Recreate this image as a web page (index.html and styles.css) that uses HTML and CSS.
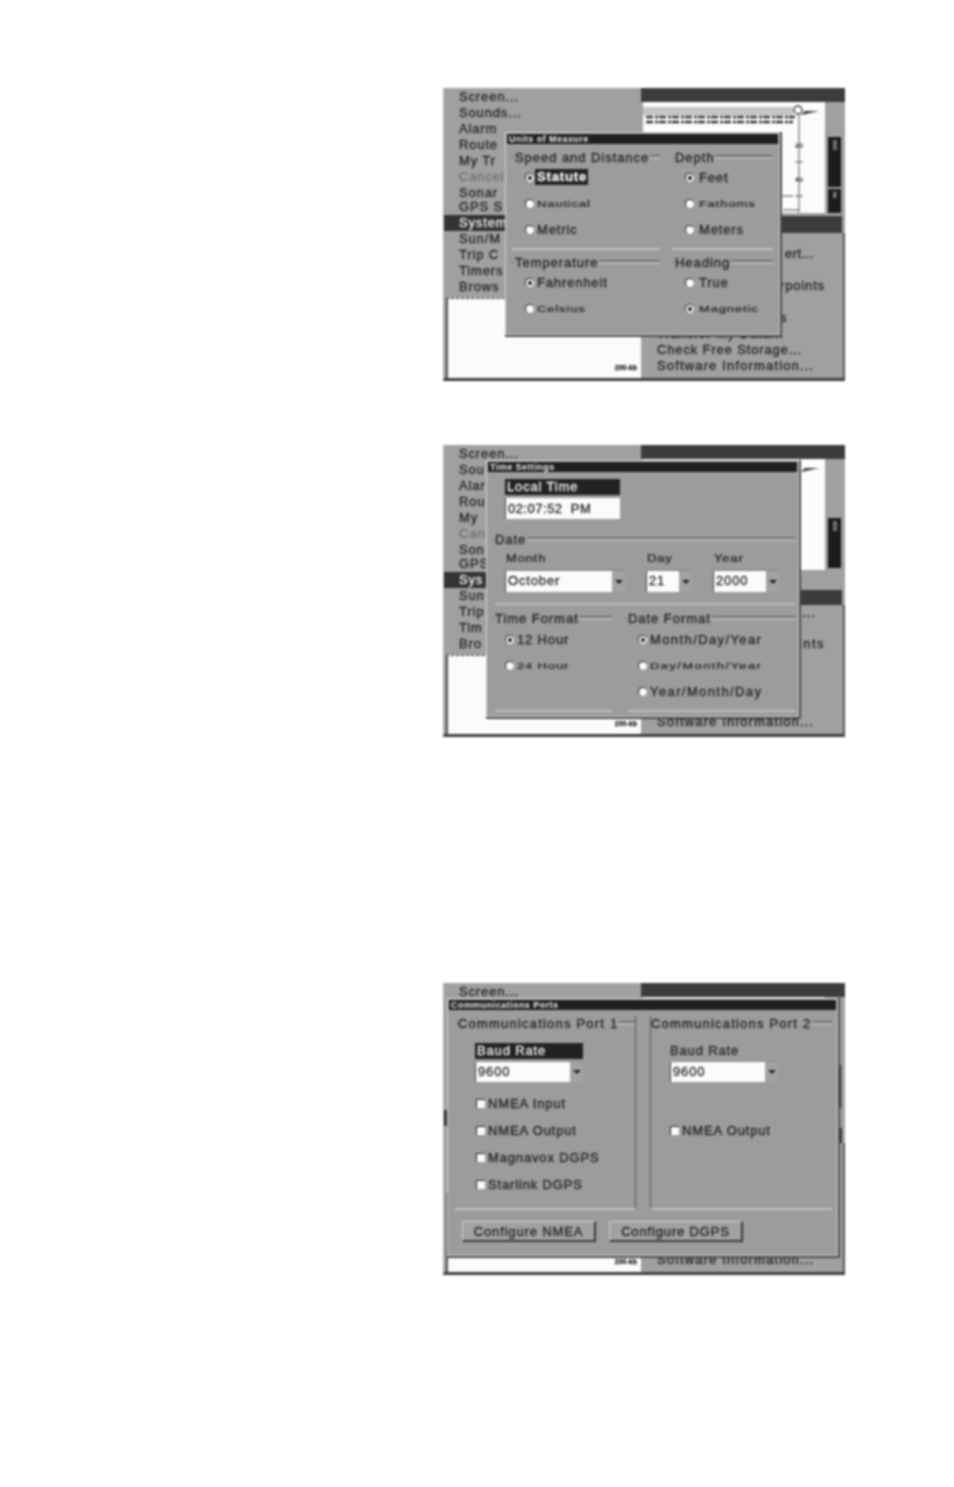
FILE: index.html
```html
<!DOCTYPE html>
<html lang="en">
<head>
<meta charset="utf-8">
<title>Setup screens</title>
<link rel="stylesheet" href="styles.css">
</head>
<body>
<main class="page">

<section class="screen">
  <div class="left-col">
    <ul class="menu">
      <li>Screen...</li><li>Sounds...</li><li>Alarm</li><li>Route</li><li>My Tr</li>
      <li class="dim">Cancel</li><li>Sonar</li><li>GPS S</li>
      <li class="sel">System</li><li>Sun/M</li><li>Trip C</li><li>Timers</li><li>Brows</li>
    </ul>
    <div class="map"><span class="scale">200-kb</span></div>
  </div>
  <div class="right-col">
    <div class="bar-top"></div>
    <div class="sonar-row">
      <svg class="sonar" viewBox="0 0 182 111" aria-hidden="true">
        <rect x="0" y="5" width="150" height="8" fill="#c4c4c4"/>
        <path d="M3 15H152M3 20H150" stroke="#333" stroke-width="2.5" stroke-dasharray="7 2 3 1"/>
        <path d="M156 12V111M152 44h8M152 60h8M152 78h8M152 94h8" stroke="#555" stroke-width="1"/>
        <circle cx="155" cy="8" r="4" fill="#fff" stroke="#444" stroke-width="1.5"/>
        <path d="M158 13L176 9L162 9Z" fill="#333"/>
        <text x="152" y="46" class="tick">20</text><text x="152" y="80" class="tick">40</text>
        <path d="M126 94H150M140 108H156" stroke="#444" stroke-width="1"/>
      </svg>
      <div class="side"><div class="side-bar"><span>600</span></div><div class="side-bar short"><span>kb</span></div></div>
    </div>
    <div class="bar-mid"></div>
    <ul class="menu menu-right">
      <li class="tail tail-ert">ert...</li>
      <li class="tail gap-row">rpoints</li>
      <li class="tail gap-row">s</li>
      <li>Transfer My Data...</li><li>Check Free Storage...</li><li class="soft">Software Information...</li>
    </ul>
  </div>

  <div class="dialog d-units">
    <h2 class="title">Units of Measure</h2>
    <div class="units-grid">
      <div class="group groove">
        <div class="legend">Speed and Distance</div>
        <div class="opt"><i class="radio on"></i><span class="hl">Statute</span></div>
        <div class="opt"><i class="radio"></i><span class="squish">Nautical</span></div>
        <div class="opt"><i class="radio"></i><span>Metric</span></div>
      </div>
      <div class="group groove">
        <div class="legend">Depth</div>
        <div class="opt"><i class="radio on"></i><span>Feet</span></div>
        <div class="opt"><i class="radio"></i><span class="squish">Fathoms</span></div>
        <div class="opt"><i class="radio"></i><span>Meters</span></div>
      </div>
      <div class="group">
        <div class="legend">Temperature</div>
        <div class="opt"><i class="radio on"></i><span>Fahrenheit</span></div>
        <div class="opt"><i class="radio"></i><span class="squish">Celsius</span></div>
      </div>
      <div class="group">
        <div class="legend">Heading</div>
        <div class="opt"><i class="radio"></i><span>True</span></div>
        <div class="opt"><i class="radio on"></i><span class="squish">Magnetic</span></div>
      </div>
    </div>
  </div>
</section>

<section class="screen screen-time">
  <div class="left-col">
    <ul class="menu">
      <li>Screen...</li><li>Sou</li><li>Alar</li><li>Rou</li><li>My</li>
      <li class="dim">Can</li><li>Son</li><li>GPS</li>
      <li class="sel">Sys</li><li>Sun</li><li>Trip</li><li>Tim</li><li>Bro</li>
    </ul>
    <div class="map"><span class="scale">200-kb</span></div>
  </div>
  <div class="right-col">
    <div class="bar-top"></div>
    <div class="sonar-row">
      <svg class="sonar" viewBox="0 0 182 111" aria-hidden="true">
        <path d="M158 13L176 9L162 9Z" fill="#333"/>
      </svg>
      <div class="side"><div class="side-bar"><span>600</span></div></div>
    </div>
    <div class="bar-mid"></div>
    <ul class="menu menu-right">
      <li class="tail tail-dots">...</li>
      <li class="tail tail-ints">ints</li>
      <li class="soft soft-info">Software Information...</li>
    </ul>
  </div>

  <div class="dialog d-time">
    <h2 class="title">Time Settings</h2>
    <div class="local">
      <div class="field-hl">Local Time</div>
      <div class="input">02:07:52&nbsp; PM</div>
    </div>
    <div class="date-group">
      <div class="legend">Date</div>
      <div class="date-fields">
        <div class="field f-month"><span class="squish-soft">Month</span><div class="select"><div class="value">October</div><div class="arrow"></div></div></div>
        <div class="field f-day"><span class="squish-soft">Day</span><div class="select"><div class="value">21</div><div class="arrow"></div></div></div>
        <div class="field f-year"><span class="squish-soft">Year</span><div class="select"><div class="value">2000</div><div class="arrow"></div></div></div>
      </div>
    </div>
    <div class="format-row">
      <div class="group f-time">
        <div class="legend">Time Format</div>
        <div class="opt"><i class="radio on"></i><span>12 Hour</span></div>
        <div class="opt"><i class="radio"></i><span class="squish">24 Hour</span></div>
      </div>
      <div class="group f-date">
        <div class="legend">Date Format</div>
        <div class="opt"><i class="radio on"></i><span>Month/Day/Year</span></div>
        <div class="opt"><i class="radio"></i><span class="squish">Day/Month/Year</span></div>
        <div class="opt"><i class="radio"></i><span>Year/Month/Day</span></div>
      </div>
    </div>
  </div>
</section>

<section class="screen screen-time screen-comm">
  <div class="left-col">
    <ul class="menu">
      <li>Screen...</li><li></li><li></li><li></li><li></li><li></li><li></li><li></li>
      <li class="sel"></li>
    </ul>
    <div class="map"><span class="scale">200-kb</span></div>
  </div>
  <div class="right-col">
    <div class="bar-top"></div>
    <div class="sonar-row">
      <svg class="sonar" viewBox="0 0 182 111" aria-hidden="true"></svg>
      <div class="side"><div class="side-bar"></div></div>
    </div>
    <div class="bar-mid"></div>
    <ul class="menu menu-right">
      <li class="soft soft-only">Software Information...</li>
    </ul>
  </div>

  <div class="dialog d-comm">
    <h2 class="title">Communications Ports</h2>
    <div class="ports">
      <div class="group port port-1">
        <div class="legend">Communications Port 1</div>
        <div class="baud">
          <div class="field-hl">Baud Rate</div>
          <div class="select"><div class="value">9600</div><div class="arrow"></div></div>
        </div>
        <div class="opt check"><i class="box"></i><span>NMEA Input</span></div>
        <div class="opt check"><i class="box"></i><span>NMEA Output</span></div>
        <div class="opt check"><i class="box"></i><span>Magnavox DGPS</span></div>
        <div class="opt check"><i class="box"></i><span>Starlink DGPS</span></div>
      </div>
      <div class="group port port-2">
        <div class="legend">Communications Port 2</div>
        <div class="baud">
          <div class="field-label">Baud Rate</div>
          <div class="select"><div class="value">9600</div><div class="arrow"></div></div>
        </div>
        <div class="opt check spacer"></div>
        <div class="opt check"><i class="box"></i><span>NMEA Output</span></div>
      </div>
    </div>
    <div class="buttons">
      <button class="btn" type="button">Configure NMEA</button>
      <button class="btn" type="button">Configure DGPS</button>
    </div>
  </div>
</section>

</main>
</body>
</html>
```

FILE: styles.css
```css
* { box-sizing: border-box; }
html, body { margin: 0; background: #fff; }
body { font-family: "Liberation Sans", Arial, sans-serif; }

.page {
  width: 954px;
  height: 1487px;
  padding: 88px 0 0 443px;
  display: flex;
  flex-direction: column;
}

/* one captured device screen */
.screen {
  position: relative;
  flex: none;
  width: 402px;
  height: 293px;
  display: flex;
  background: #a0a0a0;
  border-left: 1px solid #b4b4b4;
  border-bottom: 3px solid #3f3f3f;
  filter: blur(0.95px);
  font-size: 13px;
  letter-spacing: 0.85px;
  color: #222;
  -webkit-text-stroke: 0.3px #222;
  overflow: hidden;
}
.screen-time { height: 292px; margin-top: 64px; }
.screen-comm { margin-top: 246px; }

.left-col { width: 197px; flex: none; display: flex; flex-direction: column; }
.menu { list-style: none; margin: 0; padding: 0; }
.left-col .menu { height: 210px; padding: 1px 0 0 15px; background: #a0a0a0; flex: none; }
.menu li { height: 16px; line-height: 16px; white-space: nowrap; }
.left-col .menu li:nth-child(8) { margin-top: -2px; }
.menu .dim { color: #666; -webkit-text-stroke: 0; }
.left-col .menu .sel {
  margin-left: -15px;
  padding-left: 15px;
  background: #333;
  color: #f4f4f4;
  -webkit-text-stroke: 0.3px #f4f4f4;
}
.map {
  flex: 1;
  position: relative;
  margin-left: 2px;
  background: #fbfbfb;
  border-top: 1px dashed #333;
  border-left: 2px solid #555;
}
.scale {
  position: absolute;
  right: 4px;
  bottom: 6px;
  font-size: 7px;
  letter-spacing: 0;
  line-height: 8px;
  font-weight: 700;
}

.right-col { flex: 1; min-width: 0; display: flex; flex-direction: column; }
.bar-top { height: 14px; background: #3c3c3c; flex: none; }
.sonar-row { display: flex; height: 112px; flex: none; padding-left: 2px; }
.sonar { width: 182px; height: 111px; background: #fcfcfc; flex: none; }
.tick { font-size: 7px; letter-spacing: 0; fill: #333; stroke: none; -webkit-text-stroke: 0; }
.side { flex: 1; display: flex; flex-direction: column; justify-content: flex-end; gap: 2px; padding: 0 4px 1px 3px; }
.side-bar { height: 47px; background: #1c1c1c; color: #eee; display: flex; justify-content: center; align-items: flex-start; flex: none; }
.side-bar:first-child { height: 50px; }
.side-bar.short { height: 24px; }
.side-bar span { font-size: 6px; letter-spacing: 0; line-height: 8px; writing-mode: vertical-rl; color: #eee; -webkit-text-stroke: 0; margin-top: 3px; }
.bar-mid { height: 17px; margin: 2px 3px 0 0; background: #3c3c3c; flex: none; }
.menu-right { padding: 13px 0 0 16px; flex: 1; border-right: 2px solid #555; }
.tail { padding-left: 123px; }
.tail-ert { padding-left: 128px; letter-spacing: 0.5px; }
.gap-row { margin-top: 16px; }
.menu-right .soft { letter-spacing: 1.15px; }

.screen-time .sonar-row { margin-bottom: 19px; }
.screen-time .bar-mid { margin-top: 0; height: 15px; }
.screen-time .menu-right { padding-top: 0; }
.screen-time .side-bar:first-child { height: 50px; }
.screen-time .side { justify-content: flex-start; padding-top: 59px; }
.screen-time .tail-dots { padding-left: 145px; }
.screen-time .tail-ints { padding-left: 142px; margin-top: 15px; letter-spacing: 1.4px; }
.screen-time .soft-info { margin-top: 62px; }
.screen-time .soft-only { margin-top: 109px; }
.screen-comm .side { padding-top: 68px; }
.screen-comm .side-bar:first-child { height: 43px; }

/* dialogs */
.dialog {
  position: absolute;
  background: #9c9c9c;
  border: 1px solid #d0d0d0;
  box-shadow: 1px 1px 0 1px #4a4a4a;
  display: flex;
  flex-direction: column;
}
.title {
  flex: none;
  margin: 1px 1px 0 1px;
  height: 10px;
  padding-left: 2px;
  background: #1f1f1f;
  color: #f0f0f0;
  font-size: 9px;
  line-height: 10px;
  font-weight: 700;
  letter-spacing: 0.45px;
  -webkit-text-stroke: 0;
  white-space: nowrap;
  overflow: hidden;
}
.d-units { left: 61px; top: 44px; width: 275px; height: 203px; }
.d-time { left: 42px; top: 15px; width: 313px; height: 257px; }
.d-comm { left: 3px; top: 15px; width: 391px; height: 258px; }

.group { display: flex; flex-direction: column; }
.legend {
  display: flex;
  align-items: center;
  height: 14px;
  flex: none;
  white-space: nowrap;
  gap: 1px;
  letter-spacing: 0.95px;
}
.legend::before {
  content: "";
  width: 2px;
  height: 1px;
  background: #6e6e6e;
  flex: none;
}
.legend::after {
  content: "";
  flex: 1;
  height: 2px;
  border-top: 1px solid #5e5e5e;
  border-bottom: 1px solid #c4c4c4;
}
.groove { border-bottom: 2px solid #c0c0c0; }

.opt { height: 26px; flex: none; display: flex; align-items: center; gap: 3px; padding-left: 13px; white-space: nowrap; }
.radio {
  flex: none;
  width: 9px;
  height: 9px;
  border-radius: 50%;
  background: #fafafa;
  border-top: 1px solid #222;
  border-left: 1px solid #222;
  display: flex;
  align-items: center;
  justify-content: center;
}
.radio.on::before { content: ""; width: 4px; height: 4px; border-radius: 50%; background: #111; }
.box {
  flex: none;
  width: 9px;
  height: 9px;
  background: #fafafa;
  border-top: 1px solid #222;
  border-left: 1px solid #222;
}
.hl {
  background: #222;
  color: #f6f6f6;
  -webkit-text-stroke: 0.3px #f6f6f6;
  font-weight: 700;
  padding: 0 1px 0 2px;
  line-height: 16px;
  height: 16px;
  margin-left: -2px;
}
.squish { display: inline-block; transform: scaleY(0.68); }
.squish-soft { display: block; height: 14px; line-height: 14px; padding-left: 1px; transform: scaleY(0.82); transform-origin: left center; }

/* Units of Measure */
.units-grid {
  display: grid;
  grid-template-columns: 148px 101px;
  grid-template-rows: 100px auto;
  column-gap: 12px;
  row-gap: 5px;
  margin: 6px 0 0 6px;
}
.units-grid .group:nth-child(even) .opt { gap: 5px; }

/* Time Settings */
.local { width: 115px; margin: 7px 0 0 18px; flex: none; }
.field-hl {
  height: 16px;
  line-height: 16px;
  padding-left: 2px;
  background: #222;
  color: #f6f6f6;
  -webkit-text-stroke: 0.3px #f6f6f6;
}
.input {
  height: 21px;
  line-height: 21px;
  margin-top: 3px;
  padding-left: 2px;
  background: #fbfbfb;
  border-left: 1px solid #444;
  letter-spacing: 0.5px;
}
.date-group {
  flex: none;
  margin: 13px 3px 0 8px;
  height: 73px;
  border-bottom: 2px solid #bcbcbc;
}
.date-group .legend, .format-row .legend { margin-left: -3px; }
.date-fields { display: flex; gap: 21px; padding: 6px 0 0 10px; }
.field { display: flex; flex-direction: column; gap: 3px; }
.f-month { width: 120px; }
.f-day { width: 46px; }
.f-year { width: 66px; }
.select { display: flex; height: 23px; flex: none; background: #8f8f8f; padding-top: 2px; }
.value {
  flex: 1;
  background: #fbfbfb;
  border-left: 1px solid #444;
  padding-left: 2px;
  line-height: 20px;
  min-width: 0;
}
.arrow {
  width: 13px;
  flex: none;
  display: flex;
  align-items: center;
  justify-content: center;
  background: #a2a2a2;
}
.arrow::before {
  content: "";
  width: 0;
  height: 0;
  border: 4px solid transparent;
  border-top: 4px solid #222;
  border-bottom: 0;
}
.format-row { display: flex; gap: 16px; margin: 6px 3px 0 8px; flex: none; }
.format-row .legend { margin-bottom: 1px; }
.f-time { width: 117px; height: 101px; border-bottom: 2px solid #bcbcbc; }
.f-date { flex: 1; height: 101px; border-bottom: 2px solid #bcbcbc; }
.f-time .opt { padding-left: 10px; }
.f-date .opt { padding-left: 10px; }
.f-date .opt span { letter-spacing: 1.4px; }

/* Communications Ports */
.ports { display: flex; gap: 14px; margin: 6px 5px 0 7px; flex: none; }
.port { height: 194px; border-bottom: 2px solid #c0c0c0; }
.port-1 { width: 181px; border-right: 1px solid #555; }
.port-2 { flex: 1; border-left: 1px solid #555; }
.port .legend { letter-spacing: 1.2px; }
.port-2 .legend::before { display: none; }
.baud { width: 108px; margin: 13px 0 0 20px; flex: none; }
.port-2 .baud { margin-left: 19px; }
.field-label { height: 16px; line-height: 16px; }
.baud .select { margin-top: 2px; height: 21px; padding-top: 1px; }
.check { height: 27px; padding-left: 21px; }
.baud + .check { margin-top: 8px; }
.port-2 .check { padding-left: 19px; gap: 3px; }
.spacer { visibility: hidden; }
.buttons { display: flex; gap: 13px; margin: 11px 0 0 14px; flex: none; }
.btn {
  width: 134px;
  height: 21px;
  padding: 0;
  background: #a2a2a2;
  border: solid;
  border-width: 1px 2px 2px 1px;
  border-color: #cfcfcf #3a3a3a #3a3a3a #cfcfcf;
  font: inherit;
  letter-spacing: inherit;
  color: inherit;
  -webkit-text-stroke: inherit;
}
```
